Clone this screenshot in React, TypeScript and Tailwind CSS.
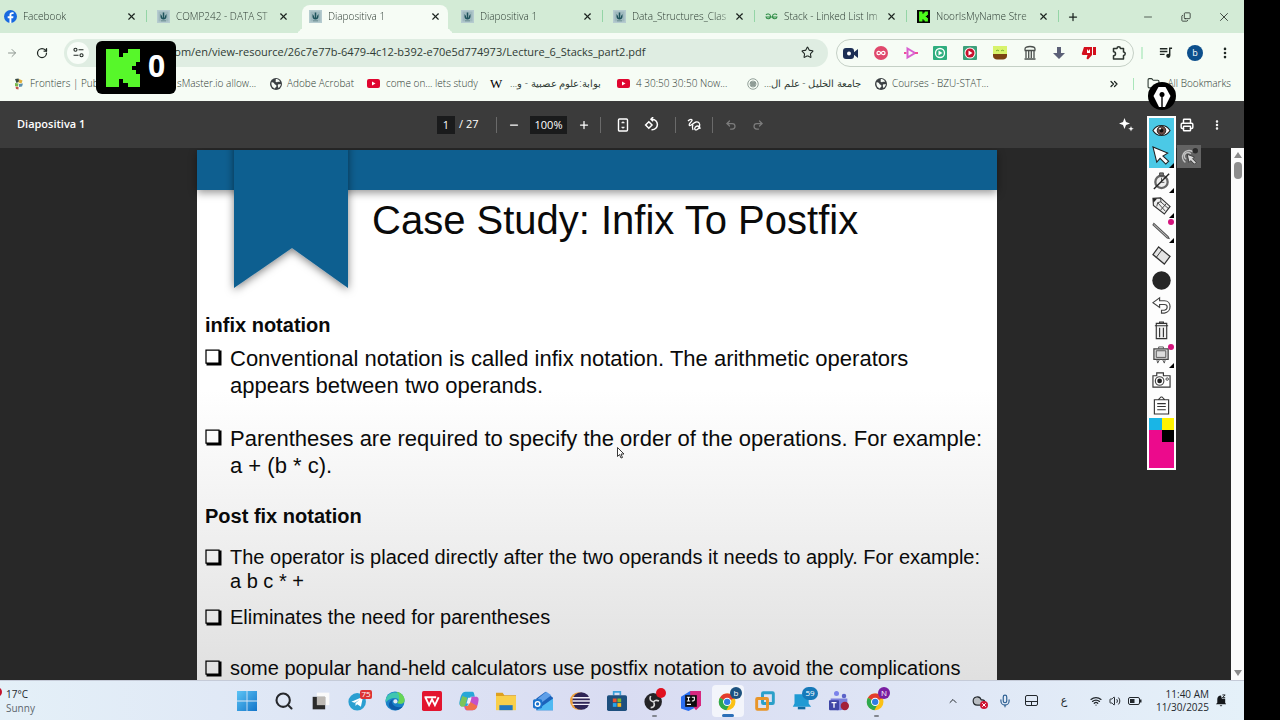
import React from 'react';
import {
  ArrowRight,
  ChevronUp,
  ChevronsRight,
  Cloud,
  Copy,
  EllipsisVertical,
  Folder,
  Mic,
  Minus,
  Plus,
  Printer,
  Redo2,
  RotateCw,
  Search,
  Star,
  Undo2,
  Volume2,
  Wifi,
  X,
} from 'lucide-react';

/* ---------- small logos ---------- */

const FacebookLogo = () => (
  <svg viewBox="0 0 24 24" className="size-[13px] shrink-0">
    <circle cx="12" cy="12" r="12" fill="#1769e0" />
    <path d="M13.6 24v-8.6h3.3l.6-3.7h-3.9V9.6c0-1.2.6-2 2.1-2h2V4.3c-.6-.1-1.600-.2-2.700-.2-3 0-4.900 1.800-4.900 5v2.600H6.800v3.700h3.300V24z" fill="#fff" />
  </svg>
);

const UniversityIcon = () => (
  <svg viewBox="0 0 26 26" className="size-[13px] shrink-0">
    <rect width="26" height="26" fill="#b5cbcf" />
    <rect x="3" y="3" width="20" height="20" fill="#9fb9be" />
    <path d="M7 8v5c0 4 2.500 6 6 6s6-2 6-6V8l-3 4v3h-1.500V5h-3v10H10v-3z" fill="#1f545c" />
    <path d="M8 21h10v1.500H8z" fill="#567d83" />
  </svg>
);

const GeeksIcon = () => (
  <svg viewBox="0 0 26 14" className="w-[13px] shrink-0" fill="none" stroke="#2f8d46" strokeWidth="2.200">
    <path d="M2 4c2-3 9-3 9 3 0 6-8 6-9 1h10M24 4c-2-3-9-3-9 3 0 6 8 6 9 1H12" />
  </svg>
);

const kickPath = 'M0 0H13V8H17V4H22V0H34V13H30V17H26V21H30V25H34V38H22V34H17V30H13V38H0Z';

const KickIcon = () => (
  <svg viewBox="-8 -6 50 50" className="size-[13px] shrink-0">
    <rect x="-8" y="-6" width="50" height="50" fill="#050505" />
    <path d={kickPath} fill="#4dfc1c" />
  </svg>
);

const GlobeIcon = () => (
  <svg viewBox="0 0 24 24" className="size-3 shrink-0">
    <circle cx="12" cy="12" r="12" fill="#3b4043" />
    <path d="M3 9c3-1 5 1 6 3s4 1 4 4-3 2-3 5c-4-1-8-5-7-12zM11 2c4 0 7 1 9 5-2 2-3 0-5 1s-4 0-4-2 2-1 0-4zM16 13c2-1 4 0 6-1-1 4-3 7-5 8-1-2-2-5-1-7z" fill="#f7fcf6" />
  </svg>
);

const YoutubeIcon = () => (
  <svg viewBox="0 0 26 18" className="w-[13px] shrink-0">
    <rect width="26" height="18" rx="4" fill="#e0062f" />
    <path d="M10 5v8l7-4z" fill="#fff" />
  </svg>
);

const FrontiersIcon = () => (
  <svg viewBox="0 0 20 24" className="h-3 w-[10px] shrink-0">
    <path d="M2 2l7-1 2 6-6 3z" fill="#394b44" />
    <path d="M10 2l7 3-2 6-6-2z" fill="#e0b03c" />
    <path d="M2 10l7 1-1 6-6-1z" fill="#79b84a" />
    <path d="M10 12l8-1-2 6-6 1z" fill="#5a8fae" />
    <path d="M3 17l6 1v5l-5-1z" fill="#c6564c" />
  </svg>
);

const SealIcon = () => (
  <svg viewBox="0 0 24 24" className="size-3 shrink-0" fill="none" stroke="#93a19a" strokeWidth="2">
    <circle cx="12" cy="12" r="10.500" />
    <circle cx="12" cy="12" r="6" fill="#c3ccc6" />
    <path d="M7 10h10M8 14h8" stroke="#5f6f68" />
  </svg>
);

/* ---------- browser tabs ---------- */

interface TabItem {
  title: string;
  icon: React.ReactNode;
  className: string;
  active?: boolean;
  divider?: boolean;
}

const tabs: TabItem[] = [
  { title: 'Facebook', icon: <FacebookLogo />, className: 'w-[147px] pl-1', divider: true },
  { title: 'COMP242 - DATA ST', icon: <UniversityIcon />, className: 'w-[152px] pl-[10px]' },
  { title: 'Diapositiva 1', icon: <UniversityIcon />, className: 'w-[152px] pl-[10px]', active: true },
  { title: 'Diapositiva 1', icon: <UniversityIcon />, className: 'w-[152px] pl-[10px]', divider: true },
  { title: 'Data_Structures_Clas', icon: <UniversityIcon />, className: 'w-[152px] pl-[10px]', divider: true },
  { title: 'Stack - Linked List Im', icon: <GeeksIcon />, className: 'w-[152px] pl-[10px]', divider: true },
  { title: 'NoorIsMyName Stre', icon: <KickIcon />, className: 'w-[152px] pl-[10px]', divider: true },
];

const TabStrip = () => (
  <div className="flex h-[33px] shrink-0 items-stretch bg-[#d3ebd6] text-[#2c3a32]">
    {tabs.map((tab, index) => (
      <div key={index} className={`relative flex shrink-0 items-center pr-[10px] ${tab.className}`}>
        {tab.active && (
          <span className="absolute inset-x-[3px] top-[5px] bottom-0 rounded-t-lg bg-[#f6fcf5] before:absolute before:bottom-0 before:-left-2 before:size-2 before:rounded-br-lg before:shadow-[4px_4px_0_0_#f6fcf5] after:absolute after:-right-2 after:bottom-0 after:size-2 after:rounded-bl-lg after:shadow-[-4px_4px_0_0_#f6fcf5]" />
        )}
        <button className="relative flex min-w-0 flex-1 items-center gap-[6px]">
          {tab.icon}
          <span className="min-w-0 flex-1 mask-r-from-85% text-left text-[10px] font-light whitespace-nowrap">{tab.title}</span>
        </button>
        <button aria-label="Close tab" className="relative flex w-3 justify-center text-[#1c2420]">
          <X className="size-[11px]" strokeWidth={2.5} />
        </button>
        {tab.divider && <span className="absolute top-[10px] right-0 h-3 w-px bg-[#94d5a6]" />}
      </div>
    ))}
    <button aria-label="New tab" className="flex w-7 items-center justify-center text-[#1c2420]">
      <Plus className="size-3" strokeWidth={2.5} />
    </button>
    <div className="ml-auto flex items-center pr-[1px] text-[#2b332e]">
      <button aria-label="Minimize" className="flex w-[38px] justify-center">
        <Minus className="size-3" strokeWidth={1.5} />
      </button>
      <button aria-label="Restore" className="flex w-[38px] justify-center">
        <Copy className="size-[10px] -scale-y-100" strokeWidth={2} />
      </button>
      <button aria-label="Close" className="flex w-[38px] justify-center">
        <X className="size-[14px]" strokeWidth={1.5} />
      </button>
    </div>
  </div>
);

/* ---------- address bar ---------- */

const extensions = [
  {
    name: 'Recorder',
    icon: (
      <>
        <rect x="0" y="3" width="11" height="11" rx="3" fill="#1d2f55" />
        <path d="M10 8l5-4v9l-5-4z" fill="#1d2f55" />
        <circle cx="6" cy="8.500" r="2" fill="#fff" />
      </>
    ),
  },
  {
    name: 'Loop',
    icon: (
      <>
        <circle cx="8" cy="8" r="7" fill="#e0496c" />
        <path d="M8 8c-1.500-2.500-4-2-4 0s2.500 2.500 4 0 4-2 4 0-2.500 2.500-4 0z" fill="none" stroke="#fff" strokeWidth="1.300" />
      </>
    ),
  },
  {
    name: 'Capture',
    icon: (
      <>
        <path d="M4.500 3.500l7.500 4.500-7.500 4.500z" fill="none" stroke="#d95fd0" strokeWidth="2" />
        <path d="M1 8h2.500M12 8h3" stroke="#ee4f9a" strokeWidth="2" />
      </>
    ),
  },
  {
    name: 'Player',
    icon: (
      <>
        <rect x="1" y="1" width="14" height="14" rx="1" fill="#2fae7f" />
        <circle cx="8" cy="8" r="4.500" fill="none" stroke="#fff" strokeWidth="1.300" />
        <path d="M6.500 5.500v5l4-2.500z" fill="#fff" />
      </>
    ),
  },
  {
    name: 'Video speed',
    icon: (
      <>
        <rect x="1" y="1" width="14" height="14" rx="1" fill="#3c9f7a" />
        <circle cx="8" cy="8" r="5.500" fill="#fff" />
        <circle cx="8" cy="8" r="4.500" fill="#c8102e" />
        <path d="M6.500 5.500v5l4-2.500z" fill="#fff" />
      </>
    ),
  },
  {
    name: 'Plant',
    icon: (
      <>
        <rect x="1" y="1" width="14" height="9" fill="#d8f36b" />
        <path d="M4 6c1-1 2-1 3 0M9 6c1-1 2-1 3 0" stroke="#6ea52a" fill="none" />
        <path d="M1 9h14v2c0 2-2 3.500-4 3.500H5c-2 0-4-1.500-4-3.500z" fill="#7a4212" />
      </>
    ),
  },
  {
    name: 'Archive',
    icon: (
      <path d="M3 5V4c0-1.500 2-2.500 5-2.500S13 2.500 13 4v1M2.500 5.500h11M4 6v7M6.700 6v7M9.300 6v7M12 6v7M2.500 14h11" fill="none" stroke="#4a4f4c" strokeWidth="1.300" />
    ),
  },
  {
    name: 'Download',
    icon: <path d="M6 2h4v6h4l-6 6-6-6h4z" fill="#5b6077" />,
  },
  {
    name: 'Dislikes',
    icon: (
      <>
        <path d="M3 2h8v8l-4 4.500-1.500-1 1-3.500H2c-1 0-1.500-1-1-2z" fill="#d40f1c" />
        <path d="M12 2h3v8h-3z" fill="#d40f1c" />
        <path d="M6 4l1.500 2L9 4v4H6z" fill="#fff" />
      </>
    ),
  },
  {
    name: 'Extensions',
    icon: (
      <path d="M2.500 3.500H6a1.700 1.700 0 013.400 0h3.100V7a1.700 1.700 0 010 3.400V14h-10v-3.300a2 2 0 000-4z" fill="none" stroke="#2b332e" strokeWidth="1.500" strokeLinejoin="round" />
    ),
  },
];

const AddressBar = () => (
  <div className="flex h-[39px] shrink-0 items-center text-[#1f2723]">
    <button aria-label="Forward" className="flex w-6 justify-center text-[#8d9690]">
      <ArrowRight className="size-3" strokeWidth={2} />
    </button>
    <button aria-label="Reload" className="flex w-9 justify-center">
      <RotateCw className="size-3" strokeWidth={2.500} />
    </button>
    <div className="ml-1 flex h-[28px] min-w-0 flex-1 items-center rounded-full bg-[#dfede2] pr-[14px] pl-[3px]">
      <button aria-label="Site information" className="flex size-[22px] shrink-0 items-center justify-center rounded-full bg-[#f8fdf8]">
        <svg viewBox="0 0 20 20" className="size-[11px]" fill="none" stroke="currentColor" strokeWidth="2">
          <circle cx="4.500" cy="5" r="2.800" />
          <path d="M10 5h9M1 15h9" />
          <circle cx="15.500" cy="15" r="2.800" />
        </svg>
      </button>
      <input
        aria-label="Address"
        className="ml-20 min-w-0 flex-1 bg-transparent text-[11px] text-[#2f3b34] outline-none"
        defaultValue="com/en/view-resource/26c7e77b-6479-4c12-b392-e70e5d774973/Lecture_6_Stacks_part2.pdf"
      />
      <button aria-label="Bookmark this tab">
        <Star className="size-[13px]" strokeWidth={2} />
      </button>
    </div>
    <div className="ml-2 flex h-[28px] w-[298px] shrink-0 items-center justify-between rounded-full border border-[#c5d0c6] px-[6px]">
      {extensions.map((ext) => (
        <button key={ext.name} aria-label={ext.name}>
          <svg viewBox="0 0 16 16" className="size-4">{ext.icon}</svg>
        </button>
      ))}
    </div>
    <span className="mx-[7px] h-3 w-0.5 shrink-0 bg-[#c6efd0]" />
    <button aria-label="Media controls" className="flex w-[30px] shrink-0 justify-center">
      <svg viewBox="0 0 16 16" className="size-[15px]" fill="none" stroke="currentColor" strokeWidth="1.500">
        <path d="M2 4h8M2 7h8M2 10h5M12.500 11V3.500H15" />
        <circle cx="11" cy="11.500" r="1.500" fill="currentColor" />
      </svg>
    </button>
    <button aria-label="Profile" className="mx-[7px] flex size-4 shrink-0 items-center justify-center rounded-full bg-[#0d4f8c] text-[9px] leading-none text-white">
      b
    </button>
    <button aria-label="Menu" className="mr-1 flex w-[30px] shrink-0 justify-center">
      <EllipsisVertical className="size-[14px]" strokeWidth={2.500} />
    </button>
  </div>
);

/* ---------- bookmarks ---------- */

const bookmarks = [
  { title: 'Frontiers | Publ', icon: <FrontiersIcon />, className: 'w-[163px] gap-[6px]' },
  { title: 'sMaster.io allow...', icon: null, className: 'w-[93px]' },
  { title: 'Adobe Acrobat', icon: <GlobeIcon />, className: 'w-[97px] gap-[5px]' },
  { title: 'come on... lets study', icon: <YoutubeIcon />, className: 'w-[123px] gap-[6px]' },
  {
    title: 'بوابة:علوم عصبية - و...',
    icon: <span className="w-3 shrink-0 font-['Liberation_Serif',serif] text-[13px] text-black">W</span>,
    className: 'w-[127px] gap-2',
    rtl: true,
  },
  { title: '4 30:50 30:50 Now...', icon: <YoutubeIcon />, className: 'w-[130px] gap-[6px]' },
  { title: 'جامعة الخليل - علم ال...', icon: <SealIcon />, className: 'w-[128px] gap-[5px]', rtl: true },
  { title: 'Courses - BZU-STAT...', icon: <GlobeIcon />, className: 'w-[120px] gap-[5px]' },
];

const BookmarksBar = () => (
  <nav className="flex h-[29px] shrink-0 items-center pb-[6px] pl-[14px] text-[10px] font-light text-[#2e3a33]">
    {bookmarks.map((item) => (
      <a key={item.title} href="#" className={`flex shrink-0 items-center whitespace-nowrap ${item.className}`}>
        {item.icon}
        <span dir={item.rtl ? 'rtl' : 'ltr'}>{item.title}</span>
      </a>
    ))}
    <button aria-label="More bookmarks" className="ml-auto text-[#1f2723]">
      <ChevronsRight className="size-3" strokeWidth={2.500} />
    </button>
    <span className="ml-[13px] h-3 w-px bg-[#a9e6ba]" />
    <a href="#" className="mr-[13px] ml-[13px] flex items-center gap-2 whitespace-nowrap">
      <Folder className="size-[13px]" strokeWidth={2} />
      All Bookmarks
    </a>
  </nav>
);

/* ---------- pdf viewer ---------- */

const Divider = () => <span className="h-4 w-px bg-[#6a6a6a]" />;

const PdfToolbar = () => (
  <div className="grid h-[47px] shrink-0 grid-cols-[437fr_auto_473fr] items-center bg-[#3b3b3b] text-white">
    <h1 className="pl-[17px] text-[11px] font-semibold">Diapositiva 1</h1>
    <div className="flex items-center text-[11px] font-medium">
      <input aria-label="Page" defaultValue="1" className="h-[18px] w-[18px] bg-[#1a1b1c] text-center outline-none" />
      <span className="w-[41px] pl-1">/ 27</span>
      <Divider />
      <button aria-label="Zoom out" className="flex w-[33px] justify-center">
        <Minus className="size-3" strokeWidth={2.500} />
      </button>
      <input aria-label="Zoom level" defaultValue="100%" className="h-[18px] w-[37px] bg-[#1a1b1c] text-center outline-none" />
      <button aria-label="Zoom in" className="flex w-[33px] justify-center">
        <Plus className="size-3" strokeWidth={2.500} />
      </button>
      <Divider />
      <button aria-label="Fit to page" className="ml-2 flex w-7 justify-center">
        <svg viewBox="0 0 24 28" className="h-[14px] w-3" fill="none" stroke="currentColor" strokeWidth="2.800">
          <rect x="3" y="2" width="18" height="24" rx="2" />
          <path d="M9 10l3-3 3 3zM9 18l3 3 3-3z" fill="currentColor" strokeWidth="1" />
        </svg>
      </button>
      <button aria-label="Rotate" className="flex w-7 justify-center">
        <svg viewBox="0 0 28 28" className="size-[15px]" fill="none" stroke="currentColor" strokeWidth="2.800">
          <path d="M9 9l6 6-6 6-6-6z" />
          <path d="M13 4h2a10 10 0 010 20h-1M17 0l-4 4 4 4" />
        </svg>
      </button>
      <span className="w-[10px]" />
      <Divider />
      <button aria-label="Draw" className="flex w-9 justify-center">
        <svg viewBox="0 0 28 28" className="size-[14px]" fill="none" stroke="currentColor" strokeWidth="2.600">
          <path d="M2 6c4-4 9-4 8-1S2 13 5 15s8-6 13-7 9 3 7 9-7 8-9 6 1-7 5-7 5 3 5 6M12 13c-2 4-2 7 0 11" />
        </svg>
      </button>
      <Divider />
      <button aria-label="Undo" className="ml-1 flex w-[27px] justify-center text-[#7b7b7b]">
        <Undo2 className="size-3" strokeWidth={2.500} />
      </button>
      <button aria-label="Redo" className="flex w-[27px] justify-center text-[#7b7b7b]">
        <Redo2 className="size-3" strokeWidth={2.500} />
      </button>
    </div>
    <div className="flex items-center justify-end pr-3">
      <button aria-label="Ask AI" className="mr-[38px] flex w-[15px] justify-center">
        <svg viewBox="0 0 30 30" className="size-[15px]" fill="currentColor">
          <path d="M11 2l3 8 8 3-8 3-3 8-3-8-8-3 8-3zM24 18l1.500 4 4 1.500-4 1.500-1.500 4-1.500-4-4-1.500 4-1.500z" />
        </svg>
      </button>
      <button aria-label="Print" className="flex w-[30px] justify-center">
        <Printer className="size-[14px]" strokeWidth={2.500} />
      </button>
      <button aria-label="More actions" className="flex w-[30px] justify-center">
        <EllipsisVertical className="size-3" strokeWidth={3} />
      </button>
    </div>
  </div>
);

interface BulletProps {
  className: string;
  children: React.ReactNode;
}

const Bullet: React.FC<BulletProps> = ({ className, children }) => (
  <li className={`flex gap-2 ${className}`}>
    <svg viewBox="0 0 34 34" className="mt-1 size-[17px] shrink-0">
      <path d="M2 2h26v26H2z" fill="none" stroke="#000" strokeWidth="2.500" />
      <path d="M28 3h5v30H3v-5h25z" fill="#000" />
    </svg>
    <span>{children}</span>
  </li>
);

const Slide = () => (
  <article className="relative h-[600px] w-[800px] shrink-0 bg-linear-to-b from-white from-40% via-[#e2e2e2] via-85% to-[#d8d8d8] font-['Liberation_Sans',Arial,sans-serif] text-[#0a0a0a]">
    <div className="h-10 bg-[#0e5f90] shadow-[0_3px_8px_rgba(0,0,0,0.4)]" />
    {/* ribbon hanging over the banner */}
    <svg viewBox="0 0 134 154" className="absolute top-0 left-[27px] h-[154px] w-[134px]">
      <defs>
        <filter id="ribbonShadow" x="-20%" y="-20%" width="140%" height="140%">
          <feDropShadow dx="0" dy="2" stdDeviation="4" floodOpacity="0.5" />
        </filter>
      </defs>
      <path d="M10 -10H124V138L68 98L10 138Z" fill="#0e5f90" filter="url(#ribbonShadow)" />
    </svg>
    <h2 className="pt-[6px] pl-[175px] text-[40px] leading-[48px]">Case Study: Infix To Postfix</h2>
    <div className="pt-[69px] pl-2 whitespace-nowrap">
      <h3 className="text-[20px] leading-6 font-bold">infix notation</h3>
      <ul className="mt-2 text-[22px] leading-[27px]">
        <Bullet className="mb-[26px]">
          Conventional notation is called infix notation. The arithmetic operators
          <br />
          appears between two operands.
        </Bullet>
        <Bullet className="mb-[25px]">
          Parentheses are required to specify the order of the operations. For example:
          <br />a + (b * c).
        </Bullet>
      </ul>
      <h3 className="text-[20px] leading-6 font-bold">Post fix notation</h3>
      <ul className="mt-[17px] text-[20px] leading-6">
        <Bullet className="mb-3">
          The operator is placed directly after the two operands it needs to apply. For example:
          <br />a b c * +
        </Bullet>
        <Bullet className="mb-[27px]">Eliminates the need for parentheses</Bullet>
        <Bullet className="mb-2">some popular hand-held calculators use postfix notation to avoid the complications</Bullet>
      </ul>
    </div>
    {/* mouse pointer */}
    <svg viewBox="0 0 16 24" className="absolute top-[297px] left-[420px] h-3 w-2" fill="#fff" stroke="#222" strokeWidth="1.800">
      <path d="M1 1v18l4-4 3 7 3-1-3-7h6z" />
    </svg>
  </article>
);

const PdfViewer = () => (
  <main className="flex min-h-0 flex-1 bg-[#282828]">
    <div className="flex min-w-0 flex-1 justify-center overflow-hidden pt-[2px] pr-[37px]">
      <Slide />
    </div>
    <div className="flex w-[13px] shrink-0 flex-col items-center bg-[#fbfbfb] py-1 text-[#8a8a8a]">
      <svg viewBox="0 0 8 6" className="h-[6px] w-2" fill="currentColor">
        <path d="M4 0l4 6H0z" />
      </svg>
      <span className="mt-1 h-[17px] w-2 rounded-full bg-[#8d8d8d]" />
      <svg viewBox="0 0 8 6" className="mt-auto h-[6px] w-2" fill="currentColor">
        <path d="M4 6l4-6H0z" />
      </svg>
    </div>
  </main>
);

/* ---------- drawing palette ---------- */

interface Tool {
  name: string;
  icon: React.ReactNode;
  selected?: boolean;
  corner?: boolean;
  dot?: boolean;
}

const tools: Tool[] = [
  {
    name: 'Show',
    selected: true,
    icon: (
      <>
        <path d="M1 10c4-7 14-7 18 0-4 7-14 7-18 0z" fill="#fff" stroke="#222" strokeWidth="1.200" />
        <circle cx="10" cy="10" r="4.500" fill="#6b4a42" stroke="#222" />
        <circle cx="10" cy="10" r="2" fill="#111" />
        <circle cx="8.500" cy="8" r="1" fill="#fff" />
      </>
    ),
  },
  {
    name: 'Pointer',
    selected: true,
    corner: true,
    icon: <path d="M1 1l4 16 3.500-4 6 6 3-3-6-5.500 5-3z" fill="#fff" stroke="#222" strokeWidth="1.100" />,
  },
  {
    name: 'Timer',
    corner: true,
    icon: (
      <>
        <circle cx="10" cy="11.500" r="6.500" fill="#eee" stroke="#666" strokeWidth="2.400" />
        <path d="M8 2h4v3H8z" fill="#777" stroke="#444" />
        <path d="M10 7v5h3" stroke="#555" />
        <path d="M2 19L18 3" stroke="#222" strokeWidth="1.500" />
      </>
    ),
  },
  {
    name: 'Pencil',
    corner: true,
    icon: (
      <>
        <path d="M1 2.500L9 2l10 9-6 8L1.500 10z" fill="#eee" stroke="#333" strokeWidth="1.200" />
        <path d="M9 2l.500 4-3.500 1-1 4M9 6l8 7M6 7l8 9M15 8l-6 7" stroke="#444" />
        <path d="M1 2.500h4.500L1.500 7z" fill="#222" />
      </>
    ),
  },
  {
    name: 'Line',
    corner: true,
    dot: true,
    icon: <path d="M2 2.500l15 14 1 2-2-.500L1 4z" fill="#ccc" stroke="#555" strokeWidth="1.100" />,
  },
  {
    name: 'Eraser',
    icon: (
      <>
        <path d="M7 1l12 10-6 8L1 9z" fill="#e4e4e4" stroke="#333" strokeWidth="1.300" />
        <path d="M10.500 4L4.500 12" stroke="#333" />
      </>
    ),
  },
  { name: 'Brush size', icon: <circle cx="10" cy="10" r="9.700" fill="#262626" /> },
  {
    name: 'Undo',
    icon: <path d="M1 7l7-5v3h5c8 0 8 12 0 13h-3v-3h3c4-1 4-6 0-6H8v3z" fill="#fff" stroke="#444" strokeWidth="1.200" />,
  },
  {
    name: 'Clear',
    icon: <path d="M3 5h14M4.500 2.500h11v2.500h-11zM8 2V1h4v1M4.500 5.500v13h11v-13M8 7v10M12 7v10" fill="#f2f2f2" stroke="#333" strokeWidth="1.200" />,
  },
  {
    name: 'Board',
    corner: true,
    dot: true,
    icon: (
      <>
        <path d="M2 3h15v11H2z" fill="#ddd" stroke="#444" strokeWidth="1.300" />
        <path d="M4.500 5h10v7h-10zM7 3V1h5v2M5 14l1 4 2-4M14 14l-1 4-2-4" stroke="#555" />
      </>
    ),
  },
  {
    name: 'Screenshot',
    icon: (
      <>
        <path d="M1 5h4V2h7v3h7v12H1z" fill="#fff" stroke="#333" strokeWidth="1.200" />
        <circle cx="8" cy="10.500" r="4.500" stroke="#444" strokeWidth="1.200" />
        <circle cx="8" cy="10.500" r="2.500" fill="#222" />
        <circle cx="16" cy="8.500" r="1.300" stroke="#444" />
      </>
    ),
  },
  {
    name: 'Clipboard',
    icon: <path d="M2.500 4h4l3-3h1l3 3h4v15h-15zM6 4h8M5.500 8h9M5.500 11h9M5.500 14.500h9" fill="#fff" stroke="#333" strokeWidth="1.200" />,
  },
];

const Palette = () => (
  <aside className="absolute top-[82px] right-[68px] flex w-[29px] flex-col items-center">
    <button aria-label="Drawing tools" className="mb-[6px] flex size-7 items-center justify-center rounded-full bg-black">
      <svg viewBox="0 0 28 28" className="size-7">
        <path d="M10.500 5h7l5 9L17 25h-6L5.500 14z" fill="#fff" />
        <circle cx="14" cy="12.500" r="2.500" fill="#000" />
        <path d="M13.300 13h1.400v13h-1.400z" fill="#000" />
      </svg>
    </button>
    <div className="w-full border-2 border-[#fdfdfd] bg-[#fdfdfd]">
      {tools.map((tool) => (
        <button
          key={tool.name}
          aria-label={tool.name}
          className={`relative flex h-[25px] w-full items-center justify-center ${tool.selected ? 'bg-[#4bc9e6]' : ''}`}
        >
          <svg viewBox="0 0 20 20" className="size-[19px]" fill="none">{tool.icon}</svg>
          {tool.corner && <span className="absolute right-0 bottom-0 size-[5px] bg-black [clip-path:polygon(100%_0,100%_100%,0_100%)]" />}
          {tool.dot && <span className="absolute top-px right-0 size-[6px] rounded-full bg-[#d4137c]" />}
        </button>
      ))}
      <div className="grid h-[50px] grid-cols-2 grid-rows-[12px_12px_26px] bg-[#ec0a8c]">
        <button aria-label="Cyan" className="bg-[#19b5e6]" />
        <button aria-label="Yellow" className="bg-[#fff200]" />
        <button aria-label="Magenta" />
        <button aria-label="Black" className="bg-black" />
      </div>
    </div>
    <button aria-label="Click highlight" className="absolute top-[63px] left-[30px] flex h-[23px] w-6 items-center justify-center bg-[#636363]">
      <svg viewBox="0 0 20 20" className="size-[18px]" fill="none">
        <path d="M14 4a7 7 0 10-8 12M12 6.500a4 4 0 10-5 6" stroke="#c4c4c4" strokeWidth="1.500" />
        <path d="M8 7l2 9 2-2 4 4 2-2-4-4 2-2z" fill="#d9d9d9" stroke="#333" />
        <circle cx="17" cy="3" r="3" fill="#2a2a2a" />
      </svg>
    </button>
  </aside>
);

const KickOverlay = () => (
  <div className="absolute top-[41px] left-24 flex h-[53px] w-20 items-center rounded-md bg-black pl-[10px]">
    <svg viewBox="0 0 34 38" className="h-[38px] w-[34px]">
      <path d={kickPath} fill="#57f72a" />
    </svg>
    <span className="ml-2 pb-[3px] font-['Noto_Sans',sans-serif] text-[30px] leading-none font-bold text-white">0</span>
  </div>
);

/* ---------- taskbar ---------- */

const ChromeMark = () => (
  <>
    <circle cx="11" cy="13" r="10" fill="#fbc116" />
    <path d="M11 13L2.300 8A10 10 0 0120 8.500z" fill="#e33b2e" />
    <path d="M2.300 8A10 10 0 0010 23l4.500-8z" fill="#2da94f" />
    <circle cx="11" cy="13" r="5" fill="#fff" />
    <circle cx="11" cy="13" r="3.800" fill="#2f7de1" />
  </>
);

interface TaskItem {
  name: string;
  icon: React.ReactNode;
  badge?: string;
  badgeClass?: string;
  active?: boolean;
  running?: boolean;
}

const taskItems: TaskItem[] = [
  {
    name: 'Start',
    icon: (
      <>
        <defs>
          <linearGradient id="startBlue" x1="0" y1="0" x2="1" y2="1">
            <stop offset="0" stopColor="#5cc4f5" />
            <stop offset="1" stopColor="#1274c9" />
          </linearGradient>
        </defs>
        <path d="M0 0h11.500v11.500H0zM12.500 0H24v11.500H12.500zM0 12.500h11.500V24H0zM12.500 12.500H24V24H12.500z" fill="url(#startBlue)" />
      </>
    ),
  },
  { name: 'Search', icon: <Search size={24} color="#26282c" strokeWidth={2.500} /> },
  {
    name: 'Task view',
    icon: (
      <>
        <path d="M7 2h15v15H7z" fill="#fafafa" />
        <path d="M2 7h15v15H2z" fill="#2b2b2b" />
        <path d="M7 7h10v10H7z" fill="#bdb9b4" />
      </>
    ),
  },
  {
    name: 'Telegram',
    badge: '75',
    badgeClass: '-top-px -right-[4px] h-[9px] w-3 rounded-xs bg-[#dd3434] text-[8px]',
    icon: (
      <>
        <circle cx="11" cy="13" r="10.500" fill="#2b9fd1" />
        <path d="M4 13l14-6-2.500 12-4.500-3-2 2v-3.500l5-4-6 3.500z" fill="#fff" />
      </>
    ),
  },
  {
    name: 'Edge',
    icon: (
      <>
        <circle cx="12" cy="12" r="11.500" fill="#1b82c9" />
        <path d="M1 10C3 0 18-1 22.500 7.500c3 6-3 9-7 7 3-3 0-6-4-6-4 0-8 2-10.500 5z" fill="#3fc7b0" />
        <path d="M14 1c7 1 10 7 9.500 11-1 4-6 4-9 2.500 4-4 3-10-.500-13.500z" fill="#67d556" />
        <path d="M8.500 13c0 5 6 8 13 5.500-4 5-11 6-15 2-4-4-1-10 5-11-2 .500-3 2-3 3.500z" fill="#0e5ba8" />
        <circle cx="12.500" cy="12.500" r="2.500" fill="#e3eaf6" />
      </>
    ),
  },
  {
    name: 'WPS',
    icon: (
      <>
        <rect x="0" y="0" width="24" height="24" rx="2" fill="#e3152f" />
        <path d="M3 7.500h14M4 7.500l4.500 9.500 3.500-7 3.500 7 4.500-9.500" fill="none" stroke="#fff" strokeWidth="2.200" />
      </>
    ),
  },
  {
    name: 'Copilot',
    icon: (
      <>
        <path d="M8 1h8c2 0 2 2 3 6h-5L10 18H4c-4 0-4-3-3-7s2-10 7-10z" fill="#28a7d8" />
        <path d="M1 14l3-8 6 2-3 11H5c-3 0-4-1-4-5z" fill="#7cc35a" />
        <path d="M16 23H9c-2 0-2-2-3-5h5l4-11h5c4 0 4 3 3 7s-2 9-7 9z" fill="#c451c9" />
        <path d="M16 23H9l-2-5h4l2-5 9 5c-1 4-3 5-6 5z" fill="#f0704a" />
        <path d="M11 8h4l-2 7H9z" fill="#f3eef8" />
      </>
    ),
  },
  {
    name: 'File Explorer',
    icon: (
      <>
        <path d="M0 2h8l2 3h14v7H0z" fill="#dea020" />
        <path d="M0 6h24v17H0z" fill="#f9cf4a" />
        <path d="M4 17h16v6H4z" fill="#2477bd" />
      </>
    ),
  },
  {
    name: 'Outlook',
    icon: (
      <>
        <path d="M4 9l11-8 9 7v15H4z" fill="#1c62bb" />
        <path d="M6 9l10-8 6 4-13 10z" fill="#5f9fe8" />
        <path d="M4 23L24 9v14z" fill="#4fb9f2" />
        <rect x="0" y="10" width="11" height="11" rx="2" fill="#1a73cc" />
        <circle cx="5.500" cy="15.500" r="2.800" fill="none" stroke="#fff" strokeWidth="1.600" />
      </>
    ),
  },
  {
    name: 'Eclipse',
    icon: (
      <>
        <circle cx="10.500" cy="12" r="10.500" fill="#f0a03a" />
        <circle cx="13.500" cy="12" r="10.500" fill="#2f2556" />
        <path d="M3 8h21M3 12h21M3 16h21" stroke="#f1eef8" strokeWidth="1.700" />
      </>
    ),
  },
  {
    name: 'Microsoft Store',
    icon: (
      <>
        <path d="M8 5V1h8v4" fill="none" stroke="#3aa0dc" strokeWidth="2" />
        <rect x="0" y="5" width="24" height="19" rx="2" fill="#1d4f7e" />
        <path d="M7 9h4.500v4.500H7z" fill="#f0532d" />
        <path d="M12.500 9H17v4.500h-4.500z" fill="#7fba2c" />
        <path d="M7 14.500h4.500V19H7z" fill="#27a5ec" />
        <path d="M12.500 14.500H17V19h-4.500z" fill="#fcb81c" />
      </>
    ),
  },
  {
    name: 'OBS Studio',
    running: true,
    badge: '',
    badgeClass: '-top-[3px] -right-[2px] size-[10px] rounded-full bg-[#e0101f]',
    icon: (
      <>
        <circle cx="11" cy="13" r="10.500" fill="#242326" />
        <path d="M8 6c-2 4 0 6 3 7M18 12c-4-2-6 0-7 2M8 20c4 0 5-3 4-6" fill="none" stroke="#d9d9d9" strokeWidth="2" />
      </>
    ),
  },
  {
    name: 'IntelliJ IDEA',
    icon: (
      <>
        <path d="M0 7L11 0l8 3v16L9 24 0 21z" fill="#2b6ff0" />
        <path d="M11 0h13v17l-6 6-7-9z" fill="#d7277f" />
        <rect x="5" y="5" width="14" height="14" fill="#0b0b0d" />
        <path d="M7 7.500h4M9 7.500v4.500M7 12h4M13 7.500h3v3c0 1-2 1.500-3 1.500M7 16h5" stroke="#fff" strokeWidth="1.300" fill="none" />
      </>
    ),
  },
  {
    name: 'Chrome',
    active: true,
    badge: 'b',
    badgeClass: '-top-1 -right-1 size-3 rounded-full bg-[#1d527f] text-[8px]',
    icon: <ChromeMark />,
  },
  {
    name: 'VMware',
    icon: (
      <>
        <rect x="9" y="2" width="13" height="13" rx="1" fill="none" stroke="#2ba0c9" strokeWidth="3.500" />
        <rect x="2" y="9" width="13" height="13" rx="1" fill="none" stroke="#e8952a" strokeWidth="3.500" />
      </>
    ),
  },
  {
    name: 'Notifications',
    badge: '59',
    badgeClass: '-top-1 -right-[6px] h-[13px] w-4 rounded-full bg-[#1679b9] text-[8px]',
    icon: (
      <>
        <path d="M3 4h17v11l3 4H1l2-4z" fill="#1f9ad3" />
        <path d="M7 19h9v3H7z" fill="#0f6aa2" />
      </>
    ),
  },
  {
    name: 'Teams',
    icon: (
      <>
        <circle cx="9" cy="3" r="3" fill="#7b83eb" />
        <circle cx="18" cy="6" r="2.700" fill="#5b63c8" />
        <path d="M2 9h20v8c0 4-6 6-10 6S2 21 2 17z" fill="#7b7fdc" />
        <rect x="0" y="11" width="12" height="12" rx="1" fill="#3f46a6" />
        <path d="M3 14h6M6 14v6" stroke="#fff" strokeWidth="1.600" />
        <circle cx="19" cy="18" r="5" fill="#a3203a" />
      </>
    ),
  },
  {
    name: 'Chrome profile N',
    running: true,
    badge: 'N',
    badgeClass: '-top-1 -right-1 size-3 rounded-full bg-[#7a1fa2] text-[8px]',
    icon: <ChromeMark />,
  },
];

const Taskbar = () => (
  <footer className="grid h-10 shrink-0 grid-cols-[231fr_auto_352fr] items-center border-t border-[#c5cbd8] bg-linear-to-r from-[#e4f0f8] via-[#d9dcf2] to-[#e5f1f9] text-[10px] text-[#23282d]">
    <button className="relative overflow-hidden pl-[6px] text-left leading-[14px]">
      <span className="absolute top-0 -left-2 size-[10px] rounded-full bg-[#c3122c]" />
      17°C
      <span className="block text-[#5d666e]">Sunny</span>
    </button>
    <div className="flex items-center gap-[5px]">
      {taskItems.map((item) => (
        <button
          key={item.name}
          aria-label={item.name}
          className={`relative flex h-8 w-8 items-center justify-center rounded-sm ${item.active ? 'bg-[#f3f5fb]' : ''}`}
        >
          <span className="relative">
            <svg viewBox="0 0 24 24" className="size-5">{item.icon}</svg>
            {item.badge !== undefined && (
              <span className={`absolute flex items-center justify-center leading-none text-white ${item.badgeClass}`}>{item.badge}</span>
            )}
          </span>
          {item.active && <span className="absolute bottom-0 h-[3px] w-3 rounded-full bg-[#2c6fb8]" />}
          {item.running && <span className="absolute bottom-0 h-[2px] w-[5px] rounded-full bg-[#82868f]" />}
        </button>
      ))}
    </div>
    <div className="flex items-center justify-end pr-[17px]">
      <button aria-label="Hidden icons" className="flex w-[26px] justify-center">
        <ChevronUp className="size-3" strokeWidth={2} />
      </button>
      <button aria-label="OneDrive" className="relative flex w-[26px] justify-center">
        <Cloud className="size-[14px] fill-[#b9bdc2]" strokeWidth={2} />
        <span className="absolute right-[4px] -bottom-[1px] flex size-2 items-center justify-center rounded-full bg-[#cf1533] text-white">
          <X className="size-[6px]" strokeWidth={4} />
        </span>
      </button>
      <button aria-label="Microphone" className="flex w-[27px] justify-center text-[#2c5f92]">
        <Mic className="size-[14px]" strokeWidth={2} />
      </button>
      <button aria-label="Touchpad" className="flex w-[26px] justify-center">
        <svg viewBox="0 0 26 22" className="w-[13px]" fill="none" stroke="currentColor" strokeWidth="2">
          <rect x="1" y="1" width="24" height="20" rx="3" />
          <path d="M1 13h24M13 13v8" />
        </svg>
      </button>
      <button aria-label="Input language" className="w-[38px] text-[11px]">ع</button>
      <button aria-label="Network and sound" className="mr-[14px] ml-[7px] flex items-center gap-[7px]">
        <Wifi className="size-3" strokeWidth={2.500} />
        <Volume2 className="size-3" strokeWidth={2} />
        <svg viewBox="0 0 28 16" className="w-[14px]" fill="none" stroke="currentColor" strokeWidth="2">
          <rect x="1" y="1" width="22" height="14" rx="3" />
          <path d="M4 4h9v8H4z" fill="currentColor" stroke="none" />
          <path d="M25.500 5v6" strokeWidth="3" />
        </svg>
      </button>
      <button className="mr-[6px] text-right leading-[13px] whitespace-nowrap">
        <span className="block">11:40 AM</span>
        <span className="block">11/30/2025</span>
      </button>
      <button aria-label="Do not disturb">
        <svg viewBox="0 0 24 28" className="h-[13px] w-3">
          <path d="M4 19V11c0-5 3-8 8-8l2 7h7v9l2 3H1zM9 24h6l-3 3z" fill="#15181b" />
          <path d="M15 2h6l-6 6h6" fill="none" stroke="#15181b" strokeWidth="2" />
        </svg>
      </button>
    </div>
  </footer>
);

const App = () => (
  <div className="flex h-screen overflow-hidden bg-black font-['Open_Sans','DejaVu_Sans',sans-serif]">
    <div className="relative flex min-w-0 flex-1 flex-col bg-[#f6fcf5]">
      <TabStrip />
      <AddressBar />
      <BookmarksBar />
      <PdfToolbar />
      <PdfViewer />
      <Taskbar />
      <KickOverlay />
      <Palette />
    </div>
    <div className="w-9 shrink-0" />
  </div>
);

export default App;
